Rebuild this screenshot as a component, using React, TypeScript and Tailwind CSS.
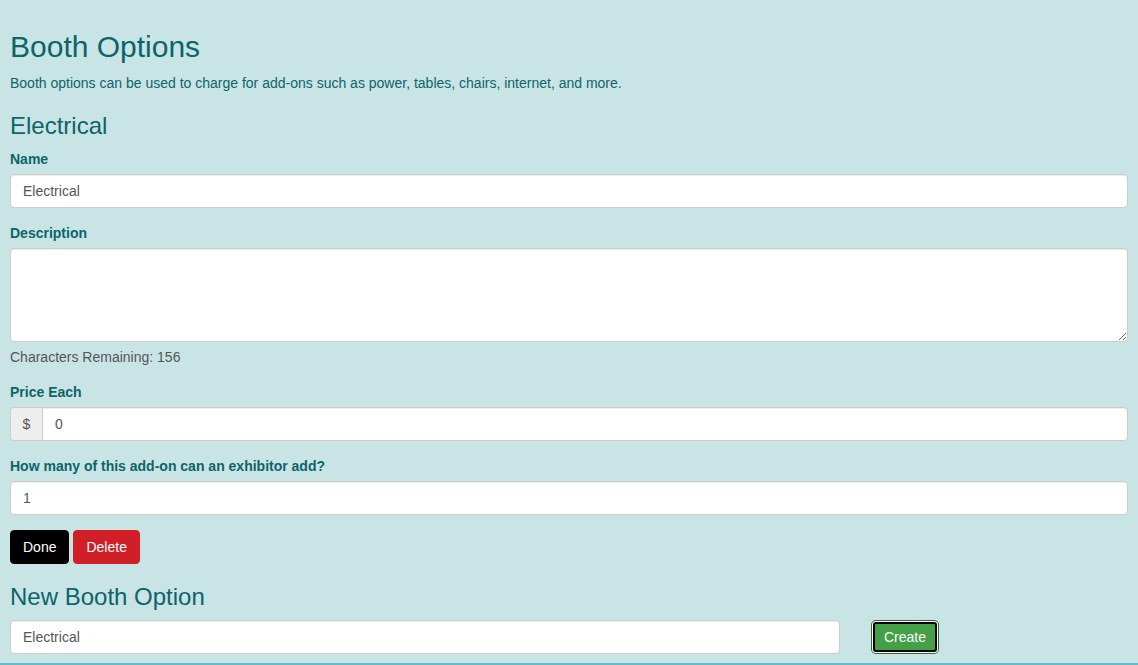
import React from "react";

export default function App() {
  const font = { fontFamily: '"Liberation Sans", Arial, Helvetica, sans-serif' };
  const inputCls =
    "block w-full h-[34px] px-[12px] text-[14px] text-[#555] bg-white border border-[#ccc] rounded-[4px] shadow-[inset_0_1px_1px_rgba(0,0,0,0.075)] outline-none";
  const labelCls = "block text-[14px] leading-[20px] font-bold text-[#0d6469] mb-[5px]";
  return (
    <div
      style={font}
      className="w-[1138px] h-[665px] bg-[#c9e4e5] border-b-2 border-[#5bc0c8] box-border flex flex-col px-[10px] pt-[30px] text-[#0d6469]"
    >
      <h1 className="text-[30px] leading-[33px] font-normal">Booth Options</h1>
      <p className="mt-[10px] text-[14px] leading-[20px]">
        Booth options can be used to charge for add-ons such as power, tables, chairs, internet, and more.
      </p>
      <h3 className="mt-[20px] text-[24px] leading-[26px] font-normal">Electrical</h3>
      <label className={labelCls + " mt-[10px]"}>Name</label>
      <input className={inputCls} defaultValue="Electrical" />
      <label className={labelCls + " mt-[15px]"}>Description</label>
      <textarea className="block w-full h-[94px] px-[12px] py-[6px] text-[14px] text-[#555] bg-white border border-[#ccc] rounded-[4px] shadow-[inset_0_1px_1px_rgba(0,0,0,0.075)] outline-none" />
      <div className="mt-[5px] text-[14px] leading-[20px] text-[#555]">Characters Remaining: 156</div>
      <label className={labelCls + " mt-[15px]"}>Price Each</label>
      <div className="flex h-[34px]">
        <span className="flex items-center justify-center w-[32px] h-[34px] text-[14px] text-[#555] bg-[#eee] border border-[#ccc] border-r-0 rounded-l-[4px]">
          $
        </span>
        <input
          className="flex-1 h-[34px] px-[12px] text-[14px] text-[#555] bg-white border border-[#ccc] rounded-r-[4px] shadow-[inset_0_1px_1px_rgba(0,0,0,0.075)] outline-none"
          defaultValue="0"
        />
      </div>
      <label className={labelCls + " mt-[15px]"}>How many of this add-on can an exhibitor add?</label>
      <input className={inputCls} defaultValue="1" />
      <div className="mt-[15px] flex gap-[4px]">
        <button className="h-[34px] px-[12px] text-[14px] text-white bg-black border border-black rounded-[4px]">
          Done
        </button>
        <button className="h-[34px] px-[12px] text-[14px] text-white bg-[#d01f27] border border-[#d01f27] rounded-[4px]">
          Delete
        </button>
      </div>
      <h3 className="mt-[20px] text-[24px] leading-[26px] font-normal">New Booth Option</h3>
      <div className="mt-[10px] flex items-center">
        <input className={inputCls + " !w-[830px]"} defaultValue="Electrical" />
        <button className="ml-[33px] w-[64px] h-[30px] text-[14px] text-white bg-[#43a047] border-2 border-black rounded-[3px] shadow-[0_0_0_1px_#ffffff,0_0_0_2px_#2e6b30]">
          Create
        </button>
      </div>
    </div>
  );
}
